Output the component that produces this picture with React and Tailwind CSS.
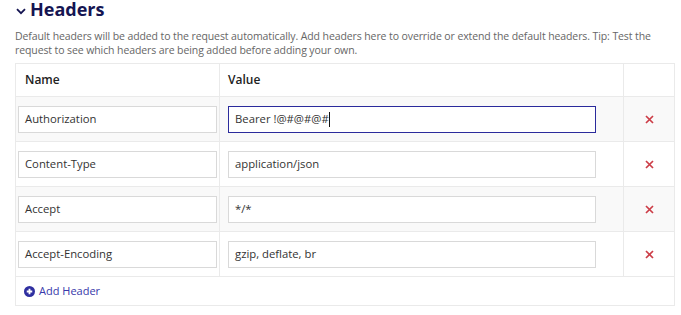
import React from 'react';

const headers = [
  { name: 'Authorization', value: 'Bearer !@#@#@#', focused: true },
  { name: 'Content-Type', value: 'application/json' },
  { name: 'Accept', value: '*/*' },
  { name: 'Accept-Encoding', value: 'gzip, deflate, br' },
];

const App = () => {
  return (
    <div className="w-[681px] h-[315px] bg-white pl-[15px] pr-[7px] font-['Open_Sans',sans-serif] text-[#333]">
      <h2 className="flex items-center h-[18px] text-[18px] leading-[18px] font-bold text-[#151552]">
        <svg width="10" height="7" viewBox="0 0 10 7" className="ml-[1px] mr-[4px] mt-[4px]">
          <path d="M1 1.2 L5 5.2 L9 1.2" stroke="#151552" strokeWidth="1.8" fill="none" />
        </svg>
        Headers
      </h2>
      <p className="mt-[11px] text-[10.5px] leading-[14px] tracking-[-0.1px] text-[#666]">
        Default headers will be added to the request automatically. Add headers here to override or extend the default headers. Tip: Test the request to see which headers are being added before adding your own.
      </p>

      <table className="mt-[6px] w-[659px] border-collapse border border-[#eaeaea] text-[11.3px] table-fixed">
        <colgroup>
          <col className="w-[204px]" />
          <col className="w-[404px]" />
          <col className="w-[51px]" />
        </colgroup>
        <thead>
          <tr className="h-[33px]">
            <th className="border border-[#eaeaea] text-left text-[12px] font-semibold pl-[9px] text-[#222]">Name</th>
            <th className="border border-[#eaeaea] text-left text-[12px] font-semibold pl-[8px] text-[#222]">Value</th>
            <th className="border border-[#eaeaea]"></th>
          </tr>
        </thead>
        <tbody>
          {headers.map((h, i) => (
            <tr key={h.name} className={i % 2 === 0 ? 'h-[45px] bg-[#f9f9f9]' : 'h-[45px] bg-white'}>
              <td className="border border-[#eaeaea] pl-[2px]">
                <div className="w-[199px] h-[27px] border border-[#d9d9d9] bg-white flex items-center pl-[6px] text-[#333]">
                  {h.name}
                </div>
              </td>
              <td className="border border-[#eaeaea] pl-[8px]">
                <div
                  className={
                    h.focused
                      ? 'w-[368px] h-[27px] border border-[#2b2b9c] bg-white flex items-center pl-[6px] text-[#333]'
                      : 'w-[368px] h-[27px] border border-[#d9d9d9] bg-white flex items-center pl-[6px] text-[#333]'
                  }
                >
                  {h.value}
                  {h.focused && <span className="w-px h-[15px] bg-[#111]"></span>}
                </div>
              </td>
              <td className="border border-[#eaeaea] text-center">
                <svg width="9" height="9" viewBox="0 0 9 9" className="inline-block">
                  <path d="M1 1 L8 8 M8 1 L1 8" stroke="#cc3d47" strokeWidth="1.7" />
                </svg>
              </td>
            </tr>
          ))}
          <tr className="h-[29px]">
            <td colSpan={3} className="border border-[#eaeaea] pl-[8px]">
              <span className="flex items-center text-[11px] text-[#3838aa]">
                <svg width="11" height="11" viewBox="0 0 12 12" className="mr-[4px]">
                  <circle cx="6" cy="6" r="6" fill="#2f2fa0" />
                  <path d="M6 3 V9 M3 6 H9" stroke="#fff" strokeWidth="2" />
                </svg>
                Add Header
              </span>
            </td>
          </tr>
        </tbody>
      </table>
    </div>
  );
};

export default App;
